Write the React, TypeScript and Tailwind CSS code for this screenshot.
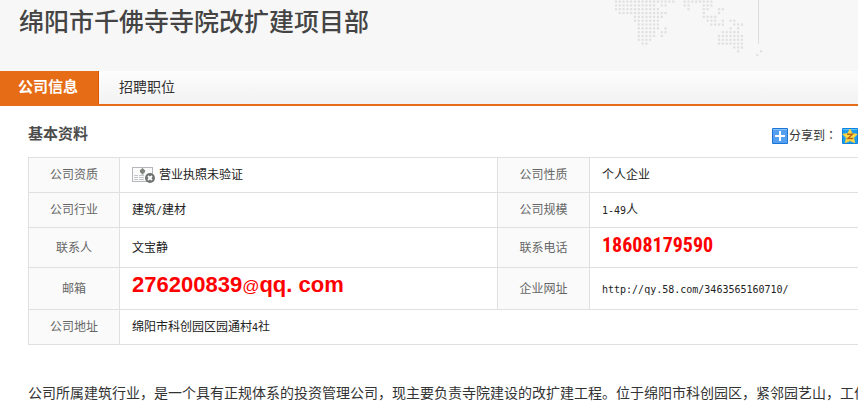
import type { ReactNode } from "react";

// [row, first column, last column] of each run of dots on the header map
const MAP_RUNS = [
  [0, 0, 15], [0, 18, 25],
  [1, 0, 10], [1, 12, 13], [1, 18, 19], [1, 23, 25],
  [2, 0, 11], [2, 19, 19], [2, 23, 24], [2, 27, 28],
  [3, 1, 13], [3, 23, 23], [3, 27, 27],
  [4, 5, 12], [4, 23, 26],
  [5, 5, 11], [5, 24, 26], [5, 28, 28], [5, 30, 31],
  [6, 6, 11], [6, 25, 28], [6, 31, 33],
  [7, 6, 11], [7, 13, 13], [7, 30, 30], [7, 32, 32],
  [8, 6, 10], [8, 12, 13], [8, 28, 32],
  [9, 6, 10], [9, 12, 12], [9, 27, 33],
  [10, 6, 9], [10, 27, 33],
  [11, 7, 8], [11, 27, 33],
  [12, 31, 33],
  [13, 32, 32], [13, 38, 38],
  [14, 37, 37],
];

function DotMap() {
  return (
    <svg className="h-[71px] w-[243px] shrink-0" viewBox="0 0 243 71" aria-hidden="true">
      {MAP_RUNS.flatMap(([row, from, to]) =>
        Array.from({ length: to - from + 1 }, (_, i) => (
          <rect
            key={`${row}-${from + i}`}
            x={(from + i) * 3.82 - 0.2}
            y={row * 3.82 + 0.5}
            width="2.2"
            height="2.2"
            fill="#e0e0e0"
          />
        ))
      )}
      <rect x="143" y="0" width="1" height="44" fill="#dddddd" />
    </svg>
  );
}

function LicenseIcon() {
  return (
    <svg className="h-4 w-[23px] shrink-0" viewBox="0 0 23 16" aria-hidden="true">
      <rect x="0.5" y="0.5" width="20" height="14" fill="#fafafa" stroke="#b4b8bc" />
      <path d="M10.5 1l2.800 2.500-.8 2.500H11.5v1.500H9.5V6H8.500L7.700 3.500z" fill="#80867e" />
      <path d="M2 8.500h4M2 10.500h4M2 12.500h4M7 8.500h5M7 10.500h5M7 12.500h5" stroke="#c4c6c8" />
      <circle cx="18" cy="11" r="5" fill="#6f7370" />
      <path d="M16 9l4 4M20 9l-4 4" stroke="#fff" strokeWidth="1.8" />
    </svg>
  );
}

function PlusIcon() {
  return (
    <svg className="size-4" viewBox="0 0 16 16" aria-hidden="true">
      <rect width="16" height="16" rx="1" fill="#1b74d8" />
      <rect x="1" y="1" width="14" height="14" fill="#559ff0" />
      <rect x="1" y="1" width="14" height="1" fill="#8cc3fa" />
      <path d="M3 8h10M8 3v10" stroke="#fff" strokeWidth="2" />
    </svg>
  );
}

function QzoneIcon() {
  return (
    <svg className="size-4" viewBox="0 0 16 16" aria-hidden="true">
      <rect width="16" height="16" rx="1" fill="#0c83dc" />
      <rect x="1" y="1" width="14" height="14" fill="#1b9cf0" />
      <rect x="1" y="1" width="14" height="1" fill="#63c4fb" />
      <path d="M8 1l2.200 4.500 5 .7-3.500 3.600.9 5L8 12.600l-4.600 2.200.9-5L.8 6.200l5-.7z" fill="#ffdc45" stroke="#fbd13c" strokeWidth="0.8" />
      <path d="M5 6.200h5.500L5.800 10.500h5.400" fill="none" stroke="#b5651a" strokeWidth="1.400" />
    </svg>
  );
}

function Label({ children }: { children: ReactNode }) {
  return (
    <th scope="row" className="border border-[#e0e0e0] bg-[#fafafa] text-center font-normal text-[#666]">
      {children}
    </th>
  );
}

function Value({ children, span }: { children: ReactNode; span?: number }) {
  return (
    <td colSpan={span} className="border border-r-0 border-[#e0e0e0] pl-3 text-[#222]">
      {children}
    </td>
  );
}

function Latin({ children }: { children: ReactNode }) {
  return <span className="font-['DejaVu_Sans_Mono','Liberation_Mono',monospace] text-[10px]">{children}</span>;
}

export default function App() {
  return (
    <div className="overflow-hidden bg-white font-['Liberation_Sans','Noto_Sans_CJK_SC',sans-serif] text-xs text-[#333]">
      <header className="flex h-[71px] justify-between bg-[#f7f7f7]">
        <h1 className="pl-[19px] pt-1 text-[25px] font-medium leading-9 text-[#444]">绵阳市千佛寺寺院改扩建项目部</h1>
        <DotMap />
      </header>

      <nav className="flex h-[35px] border-b-2 border-[#e66c15] bg-linear-to-b from-[#fdfdfd] to-[#f2f2f2]">
        <a href="#info" className="border-r border-[#dd5505] bg-[#e66c15] pl-[18px] pr-5 text-[15px] font-bold leading-8 text-white">
          公司信息
        </a>
        <a href="#jobs" className="px-5 text-sm leading-8 text-[#333]">招聘职位</a>
      </nav>

      <main className="pl-7">
        <div className="flex h-[51px] items-center justify-between">
          <h2 className="pt-1 text-[15px] font-bold leading-5 text-[#4c4c4c]">基本资料</h2>
          <div className="flex items-center pt-2">
            <PlusIcon />
            <span className="w-[54px] whitespace-nowrap pl-px leading-4">
              分享到<span className="font-['Noto_Sans_CJK_TC',sans-serif]" lang="zh-Hant">：</span>
            </span>
            <a href="#qzone" aria-label="QQ空间">
              <QzoneIcon />
            </a>
          </div>
        </div>

        <table id="info" className="w-full table-fixed border-collapse">
          <colgroup>
            <col className="w-[91px]" />
            <col className="w-[378px]" />
            <col className="w-[92px]" />
            <col />
          </colgroup>
          <tbody>
            <tr className="h-[35px]">
              <Label>公司资质</Label>
              <Value>
                <span className="flex items-center gap-1">
                  <LicenseIcon />
                  营业执照未验证
                </span>
              </Value>
              <Label>公司性质</Label>
              <Value>个人企业</Value>
            </tr>
            <tr className="h-[35px]">
              <Label>公司行业</Label>
              <Value>建筑<Latin>/</Latin>建材</Value>
              <Label>公司规模</Label>
              <Value><Latin>1-49</Latin>人</Value>
            </tr>
            <tr className="h-10">
              <Label>联系人</Label>
              <Value>文宝静</Value>
              <Label>联系电话</Label>
              <Value>
                <span className="block pb-1.5 font-['Roboto_Condensed','Liberation_Sans',sans-serif] text-xl font-bold leading-6 text-[#f00]">
                  18608179590
                </span>
              </Value>
            </tr>
            <tr className="h-[42px]">
              <Label>邮箱</Label>
              <Value>
                <span className="block pb-1.5 text-[22px] font-bold leading-6 text-[#f00]">
                  276200839<span className="text-[17px] font-normal">@</span>qq. com
                </span>
              </Value>
              <Label>企业网址</Label>
              <Value>
                <a href="http://qy.58.com/3463565160710/"><Latin>http://qy.58.com/3463565160710/</Latin></a>
              </Value>
            </tr>
            <tr className="h-[35px]">
              <Label>公司地址</Label>
              <Value span={3}>绵阳市科创园区园通村<Latin>4</Latin>社</Value>
            </tr>
          </tbody>
        </table>

        <p className="overflow-hidden whitespace-nowrap pb-2 pt-9 text-sm leading-6 text-[#333]">
          公司所属建筑行业，是一个具有正规体系的投资管理公司，现主要负责寺院建设的改扩建工程。位于绵阳市科创园区，紧邻园艺山，工作
        </p>
      </main>
    </div>
  );
}
